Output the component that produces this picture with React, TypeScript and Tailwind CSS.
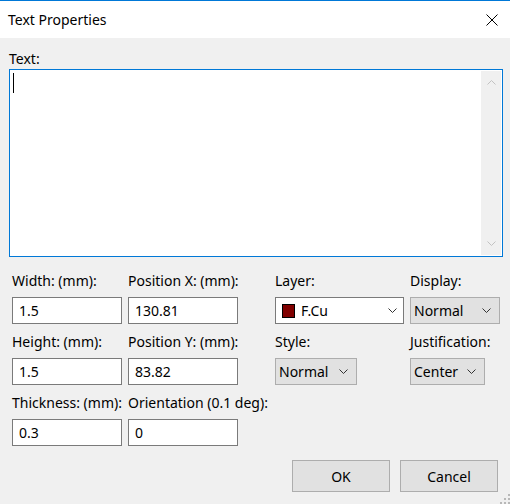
import React from 'react'

function Chevron({ className = '' }: { className?: string }) {
  return (
    <svg width="9" height="5" viewBox="0 0 9 5" className={className}>
      <path d="M0.5 0.5 L4.5 4.5 L8.5 0.5" fill="none" stroke="currentColor" strokeWidth="1" />
    </svg>
  )
}

function TextInput({ value }: { value: string }) {
  return (
    <div className="w-[110px] h-[27px] bg-white border border-[#7a7a7a] flex items-center pl-[6px] text-[14px] text-black">
      {value}
    </div>
  )
}

function Combo({ value, width }: { value: string; width: string }) {
  return (
    <div
      className={`${width} h-[27px] bg-[#e1e1e1] border border-[#adadad] flex items-center justify-between pl-[3px] pr-[8px] text-[14px] text-black`}
    >
      <span>{value}</span>
      <Chevron className="text-[#333]" />
    </div>
  )
}

function Field({ label, children }: { label: string; children: React.ReactNode }) {
  return (
    <div className="flex flex-col gap-2">
      <div className="h-4 leading-4 text-[14px] text-black whitespace-nowrap">{label}</div>
      {children}
    </div>
  )
}

export default function App() {
  return (
    <div className="w-[510px] h-[504px] bg-[#f0f0f0] border-t border-[#0078d7] font-['Noto_Sans',sans-serif] flex flex-col relative overflow-hidden">
      <div className="h-[37px] bg-white flex items-center justify-between pl-2 pr-3 shrink-0">
        <span className="text-[14px] text-black">Text Properties</span>
        <svg width="12" height="12" viewBox="0 0 12 12">
          <path d="M0.5 0.5 L11.5 11.5 M11.5 0.5 L0.5 11.5" stroke="#000" strokeWidth="1" />
        </svg>
      </div>

      <div className="flex flex-col px-[9px] pt-[13px]">
        <div className="h-4 leading-4 text-[14px] text-black">Text:</div>
        <div className="mt-[2px] w-[494px] h-[188px] bg-white border border-[#0078d7] flex p-[1px]">
          <div className="flex-1 pl-[2px] pt-[2px]">
            <div className="w-px h-[20px] bg-black" />
          </div>
          <div className="w-[20px] bg-[#f0f0f0] flex flex-col items-center justify-between py-[9px] text-[#c2c2c2]">
            <Chevron className="rotate-180" />
            <Chevron />
          </div>
        </div>

        <div className="mt-4 pl-[3px] grid grid-cols-[116px_147px_135px_90px] gap-y-[10px]">
          <Field label="Width: (mm):">
            <TextInput value="1.5" />
          </Field>
          <Field label="Position X: (mm):">
            <TextInput value="130.81" />
          </Field>
          <Field label="Layer:">
            <div className="w-[129px] h-[27px] bg-white border border-[#7a7a7a] flex items-center pl-[6px] pr-[6px] text-[14px] text-black">
              <div className="w-[13px] h-[14px] bg-[#800000] border border-black" />
              <span className="ml-[6px] flex-1">F.Cu</span>
              <Chevron className="text-[#333]" />
            </div>
          </Field>
          <Field label="Display:">
            <Combo value="Normal" width="w-[90px]" />
          </Field>

          <Field label="Height: (mm):">
            <TextInput value="1.5" />
          </Field>
          <Field label="Position Y: (mm):">
            <TextInput value="83.82" />
          </Field>
          <Field label="Style:">
            <Combo value="Normal" width="w-[82px]" />
          </Field>
          <Field label="Justification:">
            <Combo value="Center" width="w-[75px]" />
          </Field>

          <Field label="Thickness: (mm):">
            <TextInput value="0.3" />
          </Field>
          <Field label="Orientation (0.1 deg):">
            <TextInput value="0" />
          </Field>
        </div>

        <div className="mt-[14px] flex justify-end gap-[10px] pr-[3px]">
          <button className="w-[98px] h-[32px] bg-[#e1e1e1] border border-[#adadad] text-[14px] text-black">OK</button>
          <button className="w-[98px] h-[32px] bg-[#e1e1e1] border border-[#adadad] text-[14px] text-black">Cancel</button>
        </div>
      </div>

      <svg width="11" height="11" viewBox="0 0 11 11" className="absolute right-0 bottom-0">
        {[
          [9, 1], [9, 5], [5, 5], [9, 9], [5, 9], [1, 9],
        ].map(([x, y], i) => (
          <rect key={i} x={x} y={y} width="2" height="2" fill="#b8b8b8" />
        ))}
      </svg>
    </div>
  )
}
